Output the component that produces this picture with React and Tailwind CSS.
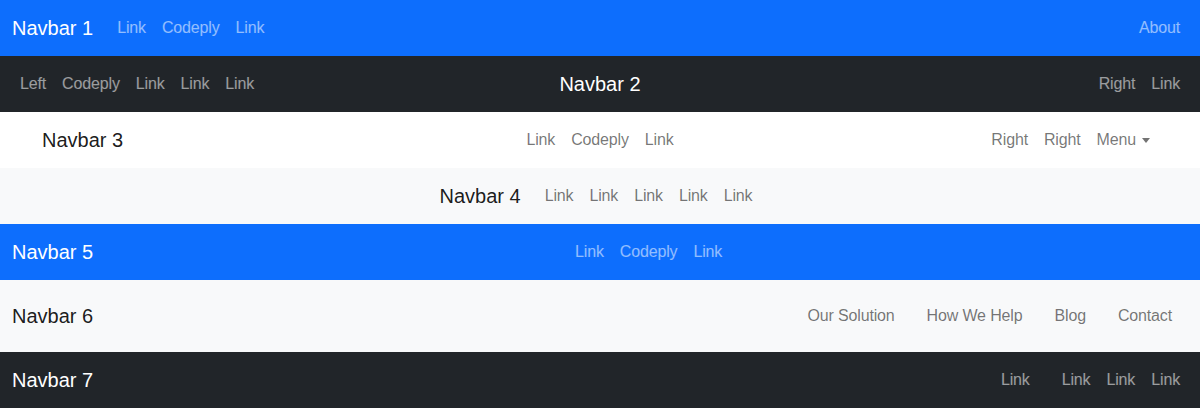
import React from 'react';

const font = { fontFamily: '"Liberation Sans", Arial, sans-serif' };

const Brand = ({ children, dark = false, className = '' }) => (
  <a
    href="#"
    className={`block text-[20px] leading-[30px] py-[5px] whitespace-nowrap ${dark ? 'text-white' : 'text-black/90'} ${className}`}
  >
    {children}
  </a>
);

const NavLink = ({ children, dark = false, className = 'px-2' }) => (
  <a
    href="#"
    className={`block py-2 text-base leading-6 whitespace-nowrap tracking-[-0.15px] ${dark ? 'text-white/55' : 'text-black/55'} ${className}`}
  >
    {children}
  </a>
);

export default function App() {
  return (
    <div style={font} className="w-[1200px]">
      {/* Navbar 1 */}
      <nav className="bg-[#0d6efd] py-2 px-3 flex items-center">
        <Brand dark className="mr-4">Navbar 1</Brand>
        <div className="flex">
          <NavLink dark>Link</NavLink>
          <NavLink dark>Codeply</NavLink>
          <NavLink dark>Link</NavLink>
        </div>
        <div className="ml-auto flex">
          <NavLink dark>About</NavLink>
        </div>
      </nav>

      {/* Navbar 2 */}
      <nav className="bg-[#212529] py-2 px-3 flex items-center">
        <div className="flex-1 flex">
          <NavLink dark>Left</NavLink>
          <NavLink dark>Codeply</NavLink>
          <NavLink dark>Link</NavLink>
          <NavLink dark>Link</NavLink>
          <NavLink dark>Link</NavLink>
        </div>
        <Brand dark>Navbar 2</Brand>
        <div className="flex-1 flex justify-end">
          <NavLink dark>Right</NavLink>
          <NavLink dark>Link</NavLink>
        </div>
      </nav>

      {/* Navbar 3 */}
      <nav className="bg-white py-2">
        <div className="max-w-[1140px] mx-auto px-3 flex items-center">
          <div className="flex-1 flex">
            <Brand>Navbar 3</Brand>
          </div>
          <div className="flex">
            <NavLink>Link</NavLink>
            <NavLink>Codeply</NavLink>
            <NavLink>Link</NavLink>
          </div>
          <div className="flex-1 flex justify-end">
            <NavLink>Right</NavLink>
            <NavLink>Right</NavLink>
            <a href="#" className="flex items-center px-2 py-2 text-base leading-6 tracking-[-0.15px] text-black/55">
              Menu
              <span className="ml-[6px] mt-[1px] inline-block w-0 h-0 border-t-[5px] border-x-[4px] border-x-transparent border-t-current" />
            </a>
          </div>
        </div>
      </nav>

      {/* Navbar 4 */}
      <nav className="bg-[#f8f9fa] py-2 px-3 flex items-center justify-center">
        <Brand className="mr-4">Navbar 4</Brand>
        <div className="flex">
          <NavLink>Link</NavLink>
          <NavLink>Link</NavLink>
          <NavLink>Link</NavLink>
          <NavLink>Link</NavLink>
          <NavLink>Link</NavLink>
        </div>
      </nav>

      {/* Navbar 5 */}
      <nav className="bg-[#0d6efd] py-2 px-3 flex items-center">
        <Brand dark className="mr-4">Navbar 5</Brand>
        <div className="flex-1 flex justify-center">
          <NavLink dark>Link</NavLink>
          <NavLink dark>Codeply</NavLink>
          <NavLink dark>Link</NavLink>
        </div>
      </nav>

      {/* Navbar 6 */}
      <nav className="bg-[#f8f9fa] py-4 px-3 flex items-center">
        <Brand className="mr-4">Navbar 6</Brand>
        <div className="ml-auto flex">
          <NavLink className="px-4">Our Solution</NavLink>
          <NavLink className="px-4">How We Help</NavLink>
          <NavLink className="px-4">Blog</NavLink>
          <NavLink className="px-4">Contact</NavLink>
        </div>
      </nav>

      {/* Navbar 7 */}
      <nav className="bg-[#212529] py-2 px-3 flex items-center">
        <Brand dark className="mr-4">Navbar 7</Brand>
        <div className="ml-auto flex">
          <NavLink dark>Link</NavLink>
        </div>
        <div className="ml-4 flex">
          <NavLink dark>Link</NavLink>
          <NavLink dark>Link</NavLink>
          <NavLink dark>Link</NavLink>
        </div>
      </nav>
    </div>
  );
}
